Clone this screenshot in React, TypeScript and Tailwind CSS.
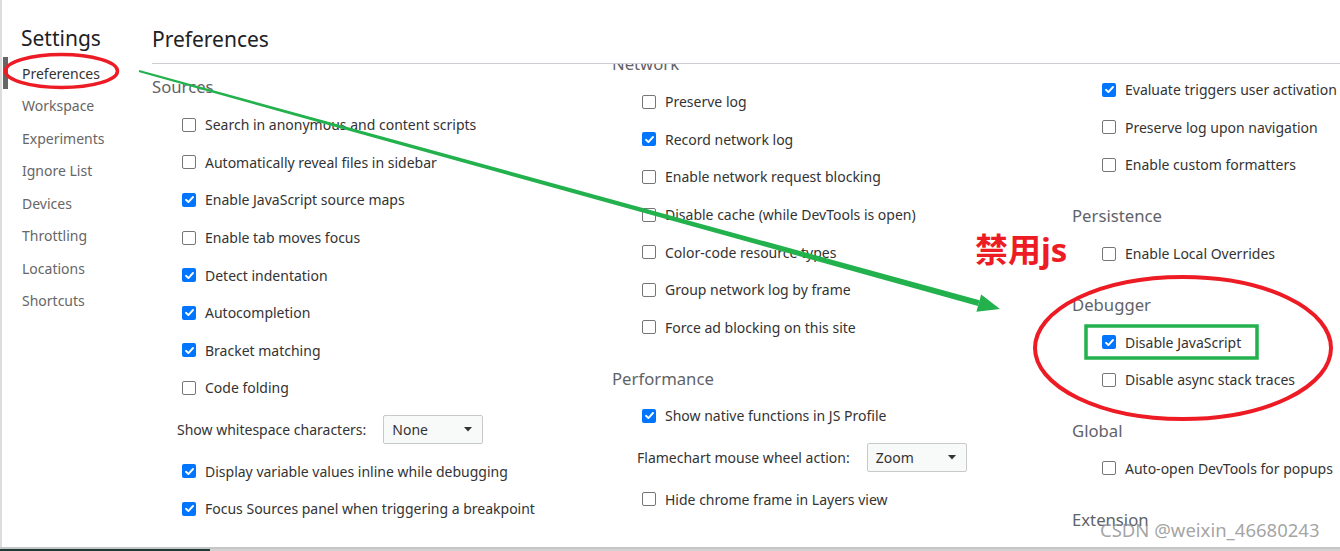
type Row =
  | { kind: 'check'; label: string; on?: boolean }
  | { kind: 'select'; label: string; value: string }

type Section = { title?: string; rows: Row[] }

const sidebar = ['Preferences', 'Workspace', 'Experiments', 'Ignore List', 'Devices', 'Throttling', 'Locations', 'Shortcuts']

const col1: Section[] = [
  {
    title: 'Sources',
    rows: [
      { kind: 'check', label: 'Search in anonymous and content scripts' },
      { kind: 'check', label: 'Automatically reveal files in sidebar' },
      { kind: 'check', label: 'Enable JavaScript source maps', on: true },
      { kind: 'check', label: 'Enable tab moves focus' },
      { kind: 'check', label: 'Detect indentation', on: true },
      { kind: 'check', label: 'Autocompletion', on: true },
      { kind: 'check', label: 'Bracket matching', on: true },
      { kind: 'check', label: 'Code folding' },
      { kind: 'select', label: 'Show whitespace characters:', value: 'None' },
      { kind: 'check', label: 'Display variable values inline while debugging', on: true },
      { kind: 'check', label: 'Focus Sources panel when triggering a breakpoint', on: true },
    ],
  },
]

const col2: Section[] = [
  {
    title: 'Network',
    rows: [
      { kind: 'check', label: 'Preserve log' },
      { kind: 'check', label: 'Record network log', on: true },
      { kind: 'check', label: 'Enable network request blocking' },
      { kind: 'check', label: 'Disable cache (while DevTools is open)' },
      { kind: 'check', label: 'Color-code resource types' },
      { kind: 'check', label: 'Group network log by frame' },
      { kind: 'check', label: 'Force ad blocking on this site' },
    ],
  },
  {
    title: 'Performance',
    rows: [
      { kind: 'check', label: 'Show native functions in JS Profile', on: true },
      { kind: 'select', label: 'Flamechart mouse wheel action:', value: 'Zoom' },
      { kind: 'check', label: 'Hide chrome frame in Layers view' },
    ],
  },
]

const col3: Section[] = [
  {
    rows: [
      { kind: 'check', label: 'Evaluate triggers user activation', on: true },
      { kind: 'check', label: 'Preserve log upon navigation' },
      { kind: 'check', label: 'Enable custom formatters' },
    ],
  },
  { title: 'Persistence', rows: [{ kind: 'check', label: 'Enable Local Overrides' }] },
  {
    title: 'Debugger',
    rows: [
      { kind: 'check', label: 'Disable JavaScript', on: true },
      { kind: 'check', label: 'Disable async stack traces' },
    ],
  },
  { title: 'Global', rows: [{ kind: 'check', label: 'Auto-open DevTools for popups' }] },
  { title: 'Extension', rows: [] },
]

function Checkbox({ on }: { on?: boolean }) {
  if (on) {
    return (
      <span className="flex h-[14px] w-[14px] shrink-0 items-center justify-center rounded-[2px] bg-[#0075ff]">
        <svg width="11" height="11" viewBox="0 0 11 11">
          <path d="M2 5.8 L4.4 8.1 L9 3" fill="none" stroke="white" strokeWidth="1.9" strokeLinecap="round" strokeLinejoin="round" />
        </svg>
      </span>
    )
  }
  return <span className="h-[14px] w-[14px] shrink-0 rounded-[2px] border border-[#767676] bg-white" />
}

function SettingRow({ row }: { row: Row }) {
  if (row.kind === 'select') {
    return (
      <div className="flex h-[45.5px] items-center gap-[17px] pl-[25px]">
        <span>{row.label}</span>
        <span className="flex h-[29px] w-[100px] items-center justify-between rounded-[2px] border border-[#c9c9c9] bg-[#f8f9f9] pl-[8px] pr-[10px]">
          {row.value}
          <svg width="8" height="5" viewBox="0 0 8 5">
            <path d="M0 0 H8 L4 4.5 Z" fill="#333" />
          </svg>
        </span>
      </div>
    )
  }
  return (
    <div className="flex h-[37.6px] items-center gap-[9px] pl-[30px]">
      <Checkbox on={row.on} />
      <span className="whitespace-nowrap">{row.label}</span>
    </div>
  )
}

function Column({ sections, className }: { sections: Section[]; className: string }) {
  return (
    <div className={`flex w-[460px] shrink-0 flex-col ${className}`}>
      {sections.map((s, i) => (
        <div key={i} className={i > 0 ? 'mt-[13px]' : ''}>
          {s.title && <div className="flex h-[38px] items-center text-[16.7px] text-[#5f6368]">{s.title}</div>}
          {s.rows.map((r) => (
            <SettingRow key={r.label} row={r} />
          ))}
        </div>
      ))}
    </div>
  )
}

function Annotations() {
  return (
    <svg className="pointer-events-none absolute inset-0" width="1340" height="551" viewBox="0 0 1340 551">
      <ellipse cx="61.5" cy="71" rx="56" ry="16.5" fill="none" stroke="#ed1c24" strokeWidth="3.5" />
      <polygon points="139.3,70 979.6,300.2 978,306 138.7,72" fill="#22b14c" />
      <polygon points="1000,309 976.4,311.8 981.2,294.4" fill="#22b14c" />
      <ellipse cx="1183" cy="348" rx="148" ry="71" fill="none" stroke="#ed1c24" strokeWidth="4" />
      <rect x="1086" y="326" width="171" height="32" fill="none" stroke="#22b14c" strokeWidth="3.5" />
    </svg>
  )
}

export default function App() {
  return (
    <div className="relative flex h-[551px] w-[1340px] flex-col overflow-hidden bg-white font-['Noto_Sans','Noto_Sans_CJK_SC',sans-serif] text-[14px] text-[#333]">
      <div className="flex h-[547px] shrink-0">
        <div className="w-[2px] shrink-0 bg-[#dcdcdc]" />
        <nav className="w-[150px] shrink-0 pl-[19px]">
          <div className="pt-[23px] text-[21px] leading-[30px] text-[#202124]">Settings</div>
          <div className="mt-[3.75px]">
            {sidebar.map((s, i) => (
              <div key={s} className={`relative flex h-[32.5px] items-center pl-[1px] text-[14px] ${i === 0 ? 'text-[#333]' : 'text-[#666]'}`}>
                {i === 0 && <span className="absolute -left-[18px] top-0 h-full w-[5px] bg-[#666]" />}
                {s}
              </div>
            ))}
          </div>
        </nav>
        <main className="flex min-w-0 flex-1 flex-col">
          <header className="h-[64px] shrink-0 border-b border-[#cacdd1] pt-[24px] text-[21px] leading-[30px] text-[#202124]">
            Preferences
          </header>
          <div className="flex min-h-0 flex-1 overflow-hidden">
            <Column sections={col1} className="pt-[4px]" />
            <Column sections={col2} className="mt-[-19px]" />
            <Column sections={col3} className="pt-[7px]" />
          </div>
        </main>
      </div>
      <div className="h-[2px] shrink-0 bg-[#c6c6c6]" />
      <div className="flex h-[2px] shrink-0">
        <div className="w-[210px] bg-[#1d3b35]" />
        <div className="flex-1 bg-[#d2d2d2]" />
      </div>

      <Annotations />
      <div className="pointer-events-none absolute left-[975px] top-[231px] whitespace-nowrap text-[33px] font-bold leading-[38px] text-[#ed1c24]">禁用js</div>
      <div className="pointer-events-none absolute left-[1100px] top-[518px] whitespace-nowrap text-[18.5px] leading-[24px] text-[#8c8c8c]/80">CSDN @weixin_46680243</div>
    </div>
  )
}
